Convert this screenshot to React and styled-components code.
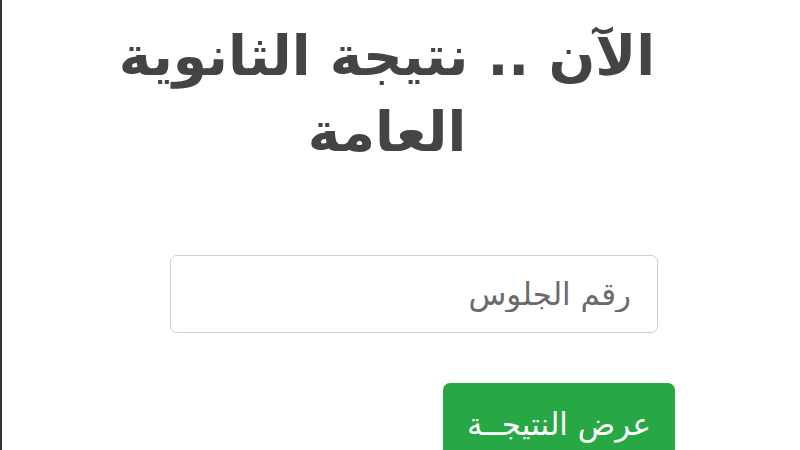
import React from 'react';
import styled, {createGlobalStyle} from "styled-components";

const Global = createGlobalStyle`
body {
margin: 0;
background: #fff;
}
`;

const Page = styled.div`
direction: rtl;
height: 450px;
overflow: hidden;
border-left: 2px solid #333;
box-sizing: border-box;
font-family: "DejaVu Sans", sans-serif;
`;

const Title = styled.h1`
margin: 18px auto 0 0;
width: 770px;
padding: 0 105px;
box-sizing: border-box;
text-align: center;
font-size: 55px;
line-height: 76px;
font-weight: bold;
color: #444;
`;

const Form = styled.form`
display: flex;
flex-direction: column;
align-items: flex-start;
padding-right: 142px;
margin-top: 85px;
`;

const Field = styled.input`
width: 488px;
height: 78px;
box-sizing: border-box;
border: 1px solid #cfcfcf;
border-radius: 7px;
padding: 0 26px;
font-family: inherit;
font-size: 31px;
color: #555;
background: #fff;
&::placeholder {
color: #6b6b6b;
}
`;

const Submit = styled.button`
margin-top: 50px;
margin-right: -17px;
width: 232px;
height: 80px;
border: none;
border-radius: 7px;
background: #28a745;
color: #fff;
font-family: inherit;
font-size: 31px;
padding-bottom: 0;
`;

const App = () => <>
    <Global/>
    <Page>
        <Title>الآن .. نتيجة الثانوية العامة</Title>
        <Form onSubmit={e => e.preventDefault()}>
            <Field type="text" placeholder="رقم الجلوس"/>
            <Submit type="submit">عرض النتيجــة</Submit>
        </Form>
    </Page>
</>;

export default App;
